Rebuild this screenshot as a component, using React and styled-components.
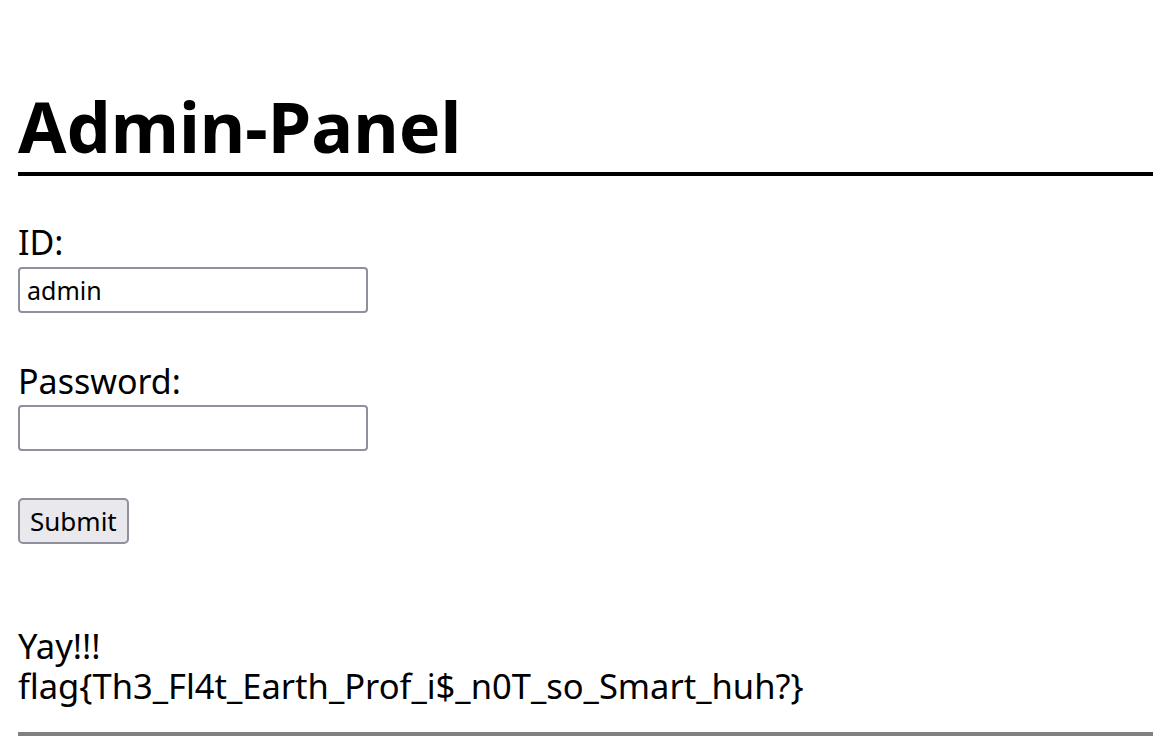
import React from "react";
import styled, { createGlobalStyle } from "styled-components";

const GlobalStyle = createGlobalStyle`
  body {
    margin: 0;
    background: #fff;
    color: #000;
    font-family: "Noto Sans", "Open Sans", sans-serif;
  }
`;

const Page = styled.div`
  padding: 82px 0 0 18px;
`;

const Title = styled.h1`
  margin: 0;
  font-size: 70px;
  line-height: 88px;
  font-weight: 700;
  padding-bottom: 2px;
  border-bottom: 4px solid #000;
`;

const Form = styled.form`
  display: flex;
  flex-direction: column;
  align-items: flex-start;
  margin-top: 46px;
`;

const Label = styled.label`
  font-size: 34px;
  line-height: 40px;
  margin-top: ${props => (props.first ? "0" : "48px")};
`;

const Input = styled.input`
  box-sizing: border-box;
  width: 350px;
  height: 46px;
  margin-top: ${props => (props.tight ? "4px" : "5px")};
  padding: 0 7px;
  font-family: inherit;
  font-size: 25px;
  color: #000;
  background: #fff;
  border: 2px solid #8f8f9d;
  border-radius: 4px;
`;

const Button = styled.button`
  box-sizing: border-box;
  height: 46px;
  margin-top: 47px;
  padding: 0 10px;
  font-family: inherit;
  font-size: 26px;
  color: #000;
  background: #e9e9ed;
  border: 2px solid #8f8f9d;
  border-radius: 5px;
`;

const Result = styled.div`
  margin-top: 82px;
  font-size: 34.5px;
  line-height: 40px;
`;

const Line = styled.div`
  white-space: nowrap;
`;

const Rule = styled.hr`
  margin: 26px 0 0;
  height: 0;
  border: 0;
  border-top: 4px solid #808080;
`;

export default function App() {
  return (
    <>
      <GlobalStyle />
      <Page>
        <Title>Admin-Panel</Title>
        <Form onSubmit={e => e.preventDefault()}>
          <Label first>ID:</Label>
          <Input type="text" defaultValue="admin" />
          <Label>Password:</Label>
          <Input type="password" tight />
          <Button type="submit">Submit</Button>
        </Form>
        <Result>
          <Line>Yay!!!</Line>
          <Line>flag{"{"}Th3_Fl4t_Earth_Prof_i$_n0T_so_Smart_huh?{"}"}</Line>
        </Result>
        <Rule />
      </Page>
    </>
  );
}
